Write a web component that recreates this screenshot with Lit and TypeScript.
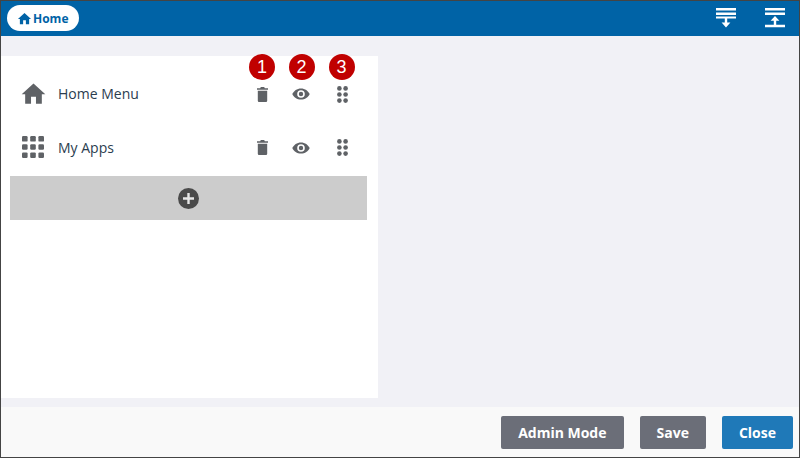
import { LitElement, html, css, svg } from "lit";
import { customElement } from "lit/decorators.js";

const homePath = "M12 3 1.5 12.6H4.6V21H9.8V14.8H14.2V21H19.4V12.6H22.5Z";

const homeIcon = (cls: string) => html`<svg class=${cls} viewBox="0 0 24 24"><path d=${homePath} fill="currentColor"></path></svg>`;
const trash = html`<svg class="act trash" viewBox="0 0 11 15"><path fill="currentColor" d="M0 1.2H3.2L3.8 0H7.2L7.8 1.2H11V2.8H0ZM.8 3.8H10.2V13.8Q10.2 15 9 15H2Q.8 15 .8 13.8Z"></path></svg>`;
const eye = html`<svg class="act eye" viewBox="0 0 18 12"><path fill="currentColor" fill-rule="evenodd" d="M9 .4C5 .4 1.8 2.8 .3 6 1.8 9.2 5 11.6 9 11.6S16.2 9.2 17.7 6C16.2 2.8 13 .4 9 .4ZM9 9.8A3.8 3.8 0 1 1 9 2.2 3.8 3.8 0 0 1 9 9.8ZM9 3.8A2.2 2.2 0 1 0 9 8.2 2.2 2.2 0 0 0 9 3.8Z"></path></svg>`;
const dots = html`<svg class="act dots" viewBox="0 0 11 17">${[2.4, 8.5, 14.6].map(
  (y) => svg`<circle cx="2.4" cy=${y} r="2.3" fill="currentColor"></circle><circle cx="8.6" cy=${y} r="2.3" fill="currentColor"></circle>`
)}</svg>`;
const grid = html`<svg class="lead" viewBox="0 0 24 24">${[0, 1, 2].flatMap((r) =>
  [0, 1, 2].map(
    (c) => svg`<rect x=${1 + c * 8.2} y=${1 + r * 8.2} width="5.6" height="5.6" rx="1.2" fill="currentColor"></rect>`
  )
)}</svg>`;

@customElement("app-root")
export class AppRoot extends LitElement {
  static styles = css`
    :host {
      display: flex;
      flex-direction: column;
      width: 800px;
      height: 458px;
      box-sizing: border-box;
      border: 1px solid #444;
      background: #f1f1f6;
      font-family: "Open Sans", sans-serif;
      color: #2b3d4f;
    }
    header {
      height: 35px;
      flex: none;
      background: #0063a6;
      display: flex;
      align-items: center;
      justify-content: space-between;
      padding: 0 14.5px 0 6px;
    }
    .crumb {
      height: 26px;
      margin-top: -1px;
      padding: 0 11px 0 10px;
      border-radius: 13px;
      background: #fff;
      color: #0063a6;
      display: flex;
      align-items: center;
      gap: 1px;
      font-size: 12px;
      font-weight: 700;
    }
    .crumb svg { width: 15px; height: 15px; }
    .tools { display: flex; gap: 28.5px; align-items: center; margin-top: -1px; }
    .tools svg { width: 20px; height: 20px; display: block; color: #fff; }
    main { flex: 1; min-height: 0; padding: 20px 0 9px; display: flex; }
    .panel {
      width: 377px;
      background: #fff;
      padding: 11px 11px 0 9px;
      box-sizing: border-box;
      position: relative;
    }
    .row {
      height: 53.5px;
      display: flex;
      align-items: center;
      padding-left: 11px;
      color: #5f6266;
      font-size: 14px;
    }
    .lead, .home { width: 24px; height: 24px; flex: none; color: #5f6266; }
    .home { width: 27px; height: 27px; margin: 0 -1.5px 0 -1.5px; }
    .label { margin-left: 13px; flex: 1; color: #2b3d4f; }
    .actions { display: flex; align-items: center; width: 118.5px; margin: 1px 5px 0 0; }
    .actions > span { width: 39.5px; display: flex; justify-content: center; }
    .act { display: block; color: #5f6266; }
    .trash { width: 11px; height: 15px; margin-right: 1px; }
    .dots { width: 11px; height: 17px; }
    .eye { width: 18px; height: 12px; margin-right: 3px; }
    .add {
      height: 44px;
      background: #cccccc;
      display: flex;
      align-items: center;
      justify-content: center;
      margin-top: 2px;
    }
    .add svg { width: 21px; height: 21px; display: block; }
    .badge {
      position: absolute;
      top: -2px;
      width: 26px;
      height: 26px;
      border-radius: 50%;
      background: #c00000;
      color: #fff;
      display: flex;
      align-items: center;
      justify-content: center;
      font: 400 18px "Liberation Sans", sans-serif;
    }
    .b1 { left: 248px; }
    .b2 { left: 287.5px; }
    .b3 { left: 327.5px; }
    footer {
      height: 50px;
      flex: none;
      background: #f9f9f9;
      display: flex;
      align-items: center;
      justify-content: flex-end;
      gap: 16px;
      padding: 0 6px 0 0;
    }
    button {
      height: 33px;
      margin: 0;
      border: none;
      border-radius: 2px;
      background: #6b6e78;
      color: #fff;
      font: 700 14px "Open Sans", sans-serif;
      padding: 0 17px;
    }
    button.primary { background: #1f79b8; }
  `;

  private row(lead: unknown, label: string) {
    return html`<div class="row">
      ${lead}
      <span class="label">${label}</span>
      <div class="actions"><span>${trash}</span><span>${eye}</span><span>${dots}</span></div>
    </div>`;
  }

  render() {
    return html`
      <header>
        <div class="crumb">${homeIcon("")}<span>Home</span></div>
        <div class="tools">
          <svg viewBox="0 0 20 20"><path fill="currentColor" d="M0 0H20V2.6H0ZM0 4.6H20V7H0ZM0 8.4H20V10.4H0ZM8.8 10.4H11.2V14.5H14.4L10 19.4 5.6 14.5H8.8Z"></path></svg>
          <svg viewBox="0 0 20 20"><path fill="currentColor" d="M0 0H20V2.6H0ZM0 4.6H20V7H0ZM10 8 14.4 12.8H11.2V16.8H20V19.2H0V16.8H8.8V12.8H5.6Z"></path></svg>
        </div>
      </header>
      <main>
        <section class="panel">
          <span class="badge b1">1</span>
          <span class="badge b2">2</span>
          <span class="badge b3">3</span>
          ${this.row(homeIcon("home"), "Home Menu")}
          ${this.row(grid, "My Apps")}
          <div class="add">
            <svg viewBox="0 0 21 21"><circle cx="10.5" cy="10.5" r="10.5" fill="#4a4a4a"></circle><path d="M9.3 5H11.7V9.3H16V11.7H11.7V16H9.3V11.7H5V9.3H9.3Z" fill="#e6e6e6"></path></svg>
          </div>
        </section>
      </main>
      <footer>
        <button>Admin Mode</button>
        <button>Save</button>
        <button class="primary">Close</button>
      </footer>
    `;
  }
}
